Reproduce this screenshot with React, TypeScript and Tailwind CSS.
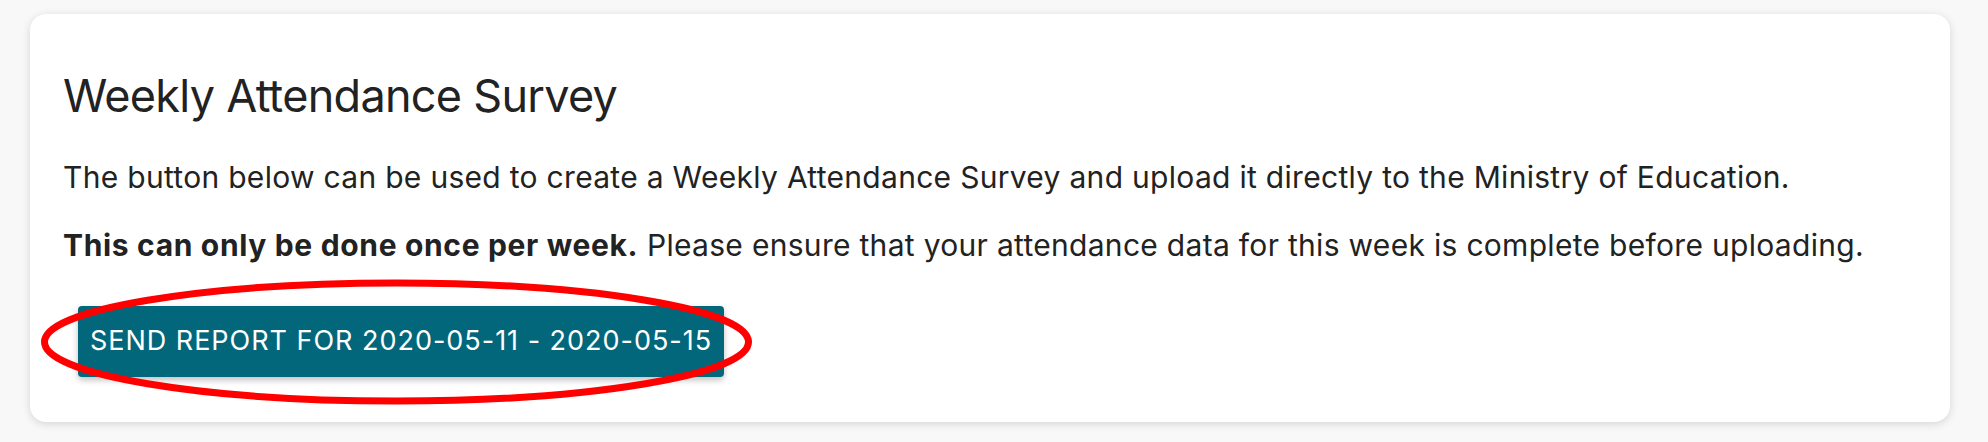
import React from 'react';

const font = { fontFamily: 'Inter, "Noto Sans", sans-serif' };

export default function App() {
  return (
    <div className="w-[1988px] h-[442px] bg-[#f8f8f8] pt-[14px] pl-[30px]" style={font}>
      <div className="relative w-[1920px] h-[408px] rounded-[16px] bg-white shadow-[0_2px_8px_rgba(0,0,0,0.14)] pt-[54px] pl-[33px] text-[#222222]">
        <h2 className="text-[45px] leading-[56px] font-normal tracking-[-0.72px]">Weekly Attendance Survey</h2>
        <p className="mt-[33px] text-[30px] leading-[40px] tracking-[0.3px]">
          The button below can be used to create a Weekly Attendance Survey and upload it directly to the Ministry of Education.
        </p>
        <p className="mt-[28px] text-[30px] leading-[40px] tracking-[0.3px]">
          <span className="font-bold tracking-[0.66px]">This can only be done once per week.</span> Please ensure that your attendance data for
          this week is complete before uploading.
        </p>
        <button className="mt-[41px] ml-[15px] flex h-[71px] w-[646px] items-center justify-center rounded-[4px] bg-[#02677b] text-[27px] tracking-[0.98px] text-white uppercase shadow-[0_3px_6px_rgba(0,0,0,0.25)]">
          Send report for 2020-05-11 - 2020-05-15
        </button>

        {/* annotation ring */}
        <svg className="absolute left-[11px] top-[265px]" width="711" height="126" viewBox="0 0 711 126">
          <ellipse cx="355.5" cy="63" rx="352" ry="59" fill="none" stroke="#ff0000" strokeWidth="7" />
        </svg>
      </div>
    </div>
  );
}
